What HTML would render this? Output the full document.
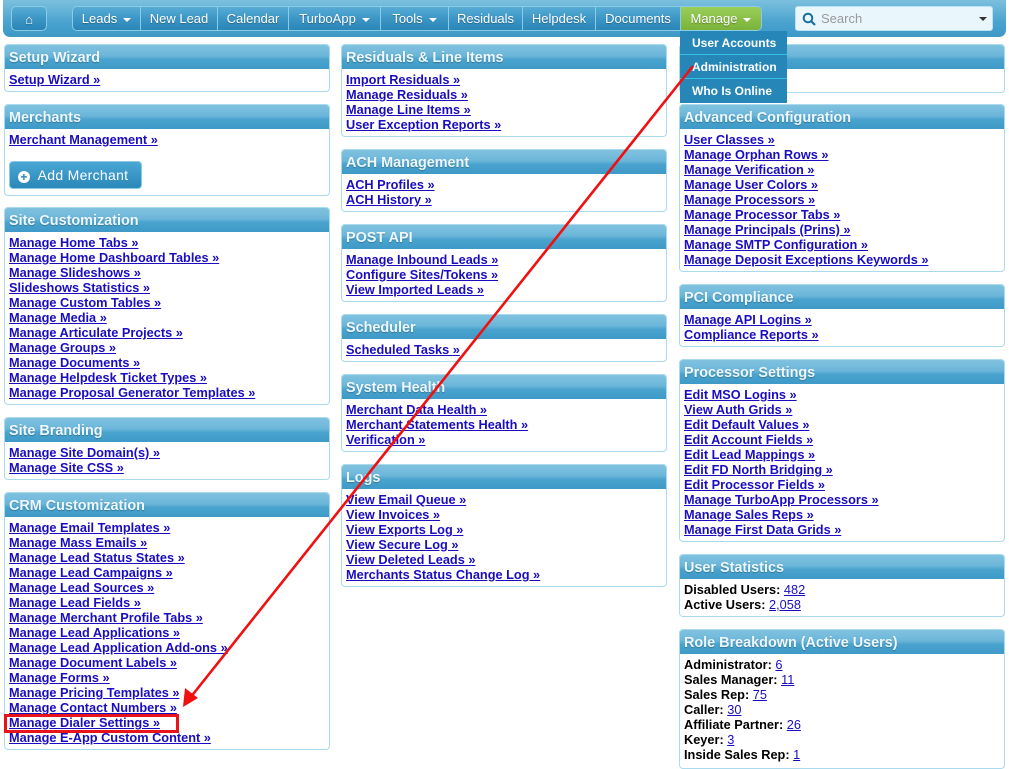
<!DOCTYPE html>
<html><head><meta charset="utf-8">
<style>
*{box-sizing:border-box;margin:0;padding:0}
body{width:1009px;height:754px;overflow:hidden;background:#fff;font-family:"Liberation Sans",Tahoma,sans-serif;position:relative}
#nav{position:absolute;left:3px;top:0;width:1003px;height:37px;border-radius:0 0 7px 7px;background:linear-gradient(#7cc0de,#4aa3cf 60%,#3d98c6)}
.btn{position:absolute;top:6px;height:25px;color:#fff;font-size:13px;line-height:25px;text-align:center;background:linear-gradient(#57acd6,#3a94c4 55%,#2a86b8);border:1px solid #8ccbe6;text-shadow:0 1px 1px rgba(0,0,0,.3)}
.grp{position:absolute;top:6px;left:72px;height:25px;display:flex;border-radius:5px;overflow:hidden;border:1px solid #8ccbe6}
.grp div{height:23px;color:#fff;font-size:13px;line-height:23px;text-align:center;background:linear-gradient(#57acd6,#3a94c4 55%,#2a86b8);border-right:1px solid #8ccbe6;text-shadow:0 1px 1px rgba(0,0,0,.3)}
.grp div.g{background:linear-gradient(#9acd5a,#7bb33a);border-right:none}
.car{display:inline-block;border:4px solid transparent;border-top:4px solid #fff;border-bottom:none;vertical-align:middle;margin-left:6px}
#search{position:absolute;left:795px;top:6px;width:198px;height:25px;background:#e9f7fd;border:1px solid #b9e2f3;border-radius:3px;font-size:13px;color:#999;line-height:23px;padding-left:25px}
.p{position:absolute;width:326px;border:1px solid #a9daee;border-radius:4px;background:#fff}
.h{height:24px;background:linear-gradient(#80c2df,#6cb6da 45%,#4aa3ce 60%,#3e9ac8);color:#eef8fc;font-weight:bold;font-size:14.4px;line-height:27px;padding-left:4px;border-radius:3px 3px 0 0;text-shadow:0 1px 1px rgba(0,0,0,.25)}
.b{padding:3px 5px 4px 4px;font-size:12.75px;line-height:15px;font-weight:bold}
.b a{color:#1a0dc0;text-decoration:underline;display:block;white-space:nowrap}
.b span a{display:inline;font-weight:normal}
#dd{position:absolute;left:680px;top:31px;width:107px;background:#2586b7}
#dd div{height:24px;color:#fff;font-weight:bold;font-size:12px;line-height:24px;padding-left:12px;border-bottom:1px solid #35c1e0}
</style></head><body>
<div id="nav"></div>
<div class="btn" style="left:11px;width:36px;border-radius:5px">&#8962;</div>
<div class="grp">
<div style="width:68px">Leads<span class="car"></span></div>
<div style="width:77px">New Lead</div>
<div style="width:71px">Calendar</div>
<div style="width:92px">TurboApp<span class="car"></span></div>
<div style="width:68px">Tools<span class="car"></span></div>
<div style="width:74px">Residuals</div>
<div style="width:73px">Helpdesk</div>
<div style="width:85px">Documents</div>
<div class="g" style="width:80px">Manage<span class="car"></span></div>
</div>
<div id="search">Search
<svg style="position:absolute;left:6px;top:5px" width="14" height="14"><circle cx="6" cy="6" r="4.3" fill="none" stroke="#1a6fa0" stroke-width="2"/><line x1="9" y1="9" x2="13" y2="13" stroke="#1a6fa0" stroke-width="2.2"/></svg>
<span style="position:absolute;right:5px;top:10px;border:4px solid transparent;border-top:4px solid #333;border-bottom:none"></span></div>

<div class="p" style="left:4px;top:44px"><div class="h">Setup Wizard</div><div class="b"><a>Setup Wizard »</a></div></div>
<div class="p" style="left:4px;top:104px;height:92px"><div class="h">Merchants</div><div class="b"><a>Merchant Management »</a>
<div style="margin-top:14px;width:133px;height:28px;border-radius:4px;background:linear-gradient(#4aa6d3,#2a88ba);border:1px solid #8ccbe6;color:#fff;font-weight:normal;font-size:14px;letter-spacing:.3px;line-height:26px;padding-left:8px"><span style="display:inline-block;width:12px;height:12px;border-radius:50%;background:#fff;color:#2a88ba;font-size:12px;line-height:12px;text-align:center;font-weight:bold;vertical-align:-1px">+</span>&nbsp; Add Merchant</div></div></div>
<div class="p" style="left:4px;top:207px"><div class="h">Site Customization</div><div class="b"><a>Manage Home Tabs »</a><a>Manage Home Dashboard Tables »</a><a>Manage Slideshows »</a><a>Slideshows Statistics »</a><a>Manage Custom Tables »</a><a>Manage Media »</a><a>Manage Articulate Projects »</a><a>Manage Groups »</a><a>Manage Documents »</a><a>Manage Helpdesk Ticket Types »</a><a>Manage Proposal Generator Templates »</a></div></div>
<div class="p" style="left:4px;top:417px"><div class="h">Site Branding</div><div class="b"><a>Manage Site Domain(s) »</a><a>Manage Site CSS »</a></div></div>
<div class="p" style="left:4px;top:492px"><div class="h">CRM Customization</div><div class="b"><a>Manage Email Templates »</a><a>Manage Mass Emails »</a><a>Manage Lead Status States »</a><a>Manage Lead Campaigns »</a><a>Manage Lead Sources »</a><a>Manage Lead Fields »</a><a>Manage Merchant Profile Tabs »</a><a>Manage Lead Applications »</a><a>Manage Lead Application Add-ons »</a><a>Manage Document Labels »</a><a>Manage Forms »</a><a>Manage Pricing Templates »</a><a>Manage Contact Numbers »</a><a>Manage Dialer Settings »</a><a>Manage E-App Custom Content »</a></div></div>

<div class="p" style="left:341px;top:44px"><div class="h">Residuals &amp; Line Items</div><div class="b"><a>Import Residuals »</a><a>Manage Residuals »</a><a>Manage Line Items »</a><a>User Exception Reports »</a></div></div>
<div class="p" style="left:341px;top:149px"><div class="h">ACH Management</div><div class="b"><a>ACH Profiles »</a><a>ACH History »</a></div></div>
<div class="p" style="left:341px;top:224px"><div class="h">POST API</div><div class="b"><a>Manage Inbound Leads »</a><a>Configure Sites/Tokens »</a><a>View Imported Leads »</a></div></div>
<div class="p" style="left:341px;top:314px"><div class="h">Scheduler</div><div class="b"><a>Scheduled Tasks »</a></div></div>
<div class="p" style="left:341px;top:374px"><div class="h">System Health</div><div class="b"><a>Merchant Data Health »</a><a>Merchant Statements Health »</a><a>Verification »</a></div></div>
<div class="p" style="left:341px;top:464px"><div class="h">Logs</div><div class="b"><a>View Email Queue »</a><a>View Invoices »</a><a>View Exports Log »</a><a>View Secure Log »</a><a>View Deleted Leads »</a><a>Merchants Status Change Log »</a></div></div>

<div class="p" style="left:679px;top:44px;height:49px"><div class="h">Admin Tools</div></div>
<div class="p" style="left:679px;top:104px"><div class="h">Advanced Configuration</div><div class="b"><a>User Classes »</a><a>Manage Orphan Rows »</a><a>Manage Verification »</a><a>Manage User Colors »</a><a>Manage Processors »</a><a>Manage Processor Tabs »</a><a>Manage Principals (Prins) »</a><a>Manage SMTP Configuration »</a><a>Manage Deposit Exceptions Keywords »</a></div></div>
<div class="p" style="left:679px;top:284px"><div class="h">PCI Compliance</div><div class="b"><a>Manage API Logins »</a><a>Compliance Reports »</a></div></div>
<div class="p" style="left:679px;top:359px"><div class="h">Processor Settings</div><div class="b"><a>Edit MSO Logins »</a><a>View Auth Grids »</a><a>Edit Default Values »</a><a>Edit Account Fields »</a><a>Edit Lead Mappings »</a><a>Edit FD North Bridging »</a><a>Edit Processor Fields »</a><a>Manage TurboApp Processors »</a><a>Manage Sales Reps »</a><a>Manage First Data Grids »</a></div></div>
<div class="p" style="left:679px;top:554px"><div class="h">User Statistics</div><div class="b"><span>Disabled Users: <a>482</a></span><br><span>Active Users: <a>2,058</a></span></div></div>
<div class="p" style="left:679px;top:629px;height:140px"><div class="h">Role Breakdown (Active Users)</div><div class="b"><span>Administrator: <a>6</a></span><br><span>Sales Manager: <a>11</a></span><br><span>Sales Rep: <a>75</a></span><br><span>Caller: <a>30</a></span><br><span>Affiliate Partner: <a>26</a></span><br><span>Keyer: <a>3</a></span><br><span>Inside Sales Rep: <a>1</a></span></div></div>

<div id="dd"><div>User Accounts</div><div>Administration</div><div style="border-bottom:none">Who Is Online</div></div>

<div style="position:absolute;left:4px;top:714px;width:175px;height:19px;border:3px solid #e8141c"></div>
<svg style="position:absolute;left:0;top:0" width="1009" height="754">
<line x1="693" y1="66" x2="190" y2="698" stroke="#f01010" stroke-width="2.6"/>
<polygon points="183,707 185,688 198,698" fill="#f01010"/>
</svg>
</body></html>
